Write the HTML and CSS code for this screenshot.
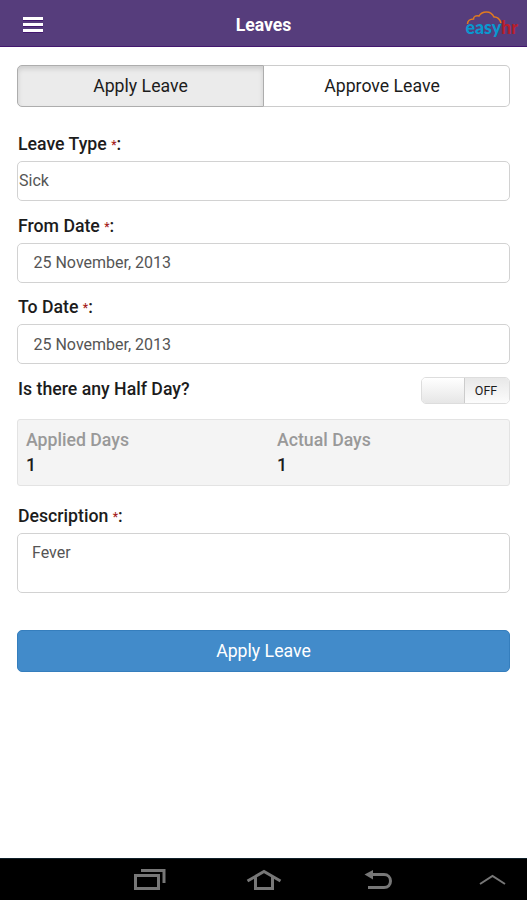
FILE: index.html
```html
<!DOCTYPE html>
<html lang="en">
<head>
<meta charset="utf-8">
<title>Leaves</title>
<link rel="stylesheet" href="styles.css">
</head>
<body>
<header class="topbar">
  <button class="menu" aria-label="Menu"><span></span><span></span><span></span></button>
  <h1>Leaves</h1>
  <svg class="logo" width="56" height="30" viewBox="0 0 56 30">
    <path d="M4.500 14C4.500 11 7 9 10.500 9C10.500 6 13.500 5.300 16 6C19 .7 28 0 31 7C34 6.500 37 9 38 13" fill="none" stroke="#e17a20" stroke-width="1.500"/>
    <text x="2.500" y="23.500" textLength="52.500" lengthAdjust="spacingAndGlyphs"><tspan class="easy">easy</tspan><tspan class="hr">hr</tspan></text>
  </svg>
</header>
<main class="content">
  <nav class="tabs">
    <button class="tab active">Apply Leave</button>
    <button class="tab">Approve Leave</button>
  </nav>
  <form class="form">
    <label class="label">Leave Type <i>*</i>:</label>
    <div class="field select">Sick</div>
    <label class="label">From Date <i>*</i>:</label>
    <div class="field">25 November, 2013</div>
    <label class="label">To Date <i>*</i>:</label>
    <div class="field last">25 November, 2013</div>
    <div class="half">
      <span class="label">Is there any Half Day?</span>
      <div class="switch"><span class="knob"></span><span class="off">OFF</span></div>
    </div>
    <div class="days">
      <div><p class="name">Applied Days</p><p class="count">1</p></div>
      <div><p class="name">Actual Days</p><p class="count">1</p></div>
    </div>
    <label class="label desc">Description <i>*</i>:</label>
    <div class="field area">Fever</div>
    <button type="button" class="submit">Apply Leave</button>
  </form>
</main>
<footer class="navbar">
  <svg width="527" height="42" viewBox="0 0 527 42" fill="none" stroke="#777" stroke-width="3">
    <path d="M135.500 17.500H158.500V30.500H135.500ZM141 12.500H164V25"/>
    <path d="M247.500 23L264 13.500L280.500 23M255.500 19V30.500H272.500V19"/>
    <path d="M371 16.500H384C388 16.500 390.500 19.500 390.500 23C390.500 27 388 29.500 384 29.500H368"/>
    <path d="M364.500 16.500L373 12V21.500Z" fill="#777" stroke="none"/>
    <path d="M480 26L492.500 18L505 26" stroke-width="2"/>
  </svg>
</footer>
</body>
</html>
```
FILE: styles.css
```css
* { box-sizing: border-box; }
body {
  margin: 0;
  height: 900px;
  display: flex;
  flex-direction: column;
  background: #fff;
  color: #1c1c1c;
  font: 17.7px/24px Roboto, sans-serif;
}
button { font: inherit; color: inherit; padding: 0; }
p, h1 { margin: 0; }
.topbar {
  height: 47px;
  flex: none;
  display: grid;
  grid-template-columns: 64px 1fr 64px;
  align-items: center;
  background: #563d7c;
  border-bottom: 1px solid #43176f;
}
.topbar h1 { text-align: center; color: #fff; font-size: 17.6px; font-weight: 700; padding-top: 3px; }
.menu {
  margin-left: 23px;
  padding-top: 2px;
  width: 20px;
  border: 0;
  background: none;
  display: grid;
  gap: 3px;
}
.menu span { height: 3px; background: #fff; box-shadow: 0 1px 0 #43176f; }
.logo { display: block; margin-top: 3px; }
.logo text { font-family: Lato, sans-serif; font-size: 18.500px; font-weight: 900; }
.easy { fill: #0998cf; }
.hr { fill: #b61f2d; }
.content { flex: 1; padding: 18px 17px 0; }
.tabs { display: grid; grid-template-columns: 247px 1fr; height: 42px; }
.tab { border: 1px solid #ccc; background: #fff; }
.tab:first-child { border-radius: 5px 0 0 5px; }
.tab:last-child { border-radius: 0 5px 5px 0; border-left: 0; padding-right: 9px; }
.tab.active { background: #ebebeb; border-color: #adadad; box-shadow: inset 0 3px 5px rgba(0, 0, 0, .125); }
.form { display: flex; flex-direction: column; padding-top: 25px; }
.label { font-weight: 500; height: 24px; margin-bottom: 5px; padding-left: 1px; white-space: nowrap; }
.label i { font-style: normal; font-size: 12px; line-height: 1; vertical-align: 1px; color: #a51d1d; }
.field {
  height: 40px;
  margin-bottom: 12px;
  padding: 0 15.500px;
  border: 1px solid #d2d2d2;
  border-radius: 5px;
  color: #555;
  font-size: 16px;
  line-height: 38px;
}
.select { padding-left: 1px; margin-bottom: 13px; }
.last { margin-bottom: 13px; line-height: 39px; }
.half { display: flex; justify-content: space-between; height: 42px; }
.switch {
  width: 89px;
  height: 27px;
  display: flex;
  border: 1px solid #ddd;
  border-radius: 5px;
  overflow: hidden;
}
.knob { width: 43px; border-right: 1px solid #ccc; background: linear-gradient(#fff, #e6e6e6); }
.off { flex: 1; background: linear-gradient(#e8e8e8, #fcfcfc); font-size: 12.500px; line-height: 25px; padding-right: 2px; text-align: center; }
.days {
  height: 67px;
  display: grid;
  grid-template-columns: 251px 1fr;
  padding: 8px;
  background: #f4f4f4;
  border: 1px solid #e3e3e3;
  border-radius: 3px;
  font-weight: 500;
}
.name { color: #999; }
.count { padding-top: 1px; }
.desc { margin-top: 18px; }
.area { height: 60px; padding: 0 14px; margin-bottom: 37px; }
.submit { height: 42px; border: 1px solid #357ebd; border-radius: 5px; background: #428bca; color: #fff; }
.navbar { height: 42px; flex: none; background: #000; border-top: 1px solid #10202a; }
.navbar svg { display: block; margin-top: -1px; }
```
